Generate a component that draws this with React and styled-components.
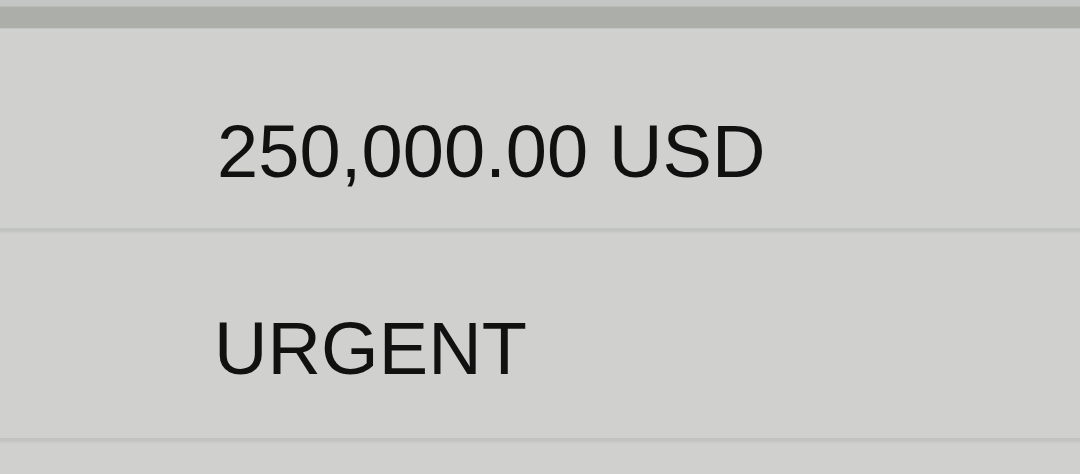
import styled, { createGlobalStyle } from "styled-components";

const GlobalStyle = createGlobalStyle`
  html, body {
    margin: 0;
    padding: 0;
    background: #d0d1cf;
  }
  * {
    box-sizing: border-box;
  }
`;

const Screen = styled.div`
  width: 1080px;
  height: 474px;
  overflow: hidden;
  display: flex;
  flex-direction: column;
  background: #d0d1cf;
  font-family: "Liberation Sans", Arial, sans-serif;
`;

const TopEdge = styled.div`
  height: 7px;
  background: #c3c6c4;
  border-bottom: 1px solid #b8bbb7;
`;

const HeaderBand = styled.div`
  height: 22px;
  background: #abaea9;
  border-bottom: 1px solid #c6c8c5;
`;

const Field = styled.div`
  height: ${(p) => p.$height}px;
  padding-top: ${(p) => p.$top}px;
  padding-left: ${(p) => p.$left}px;
  border-bottom: 3px solid #c2c4c1;
  box-shadow: 0 1px 2px rgba(150, 155, 150, 0.25);
`;

const Value = styled.span`
  display: block;
  font-size: 74px;
  line-height: 74px;
  color: #111;
  letter-spacing: 0.1px;
`;

export default function App() {
  return (
    <Screen>
      <GlobalStyle />
      <TopEdge />
      <HeaderBand />
      <Field $height={202} $top={86} $left={217}>
        <Value>250,000.00 USD</Value>
      </Field>
      <Field $height={210} $top={81} $left={214}>
        <Value>URGENT</Value>
      </Field>
    </Screen>
  );
}
